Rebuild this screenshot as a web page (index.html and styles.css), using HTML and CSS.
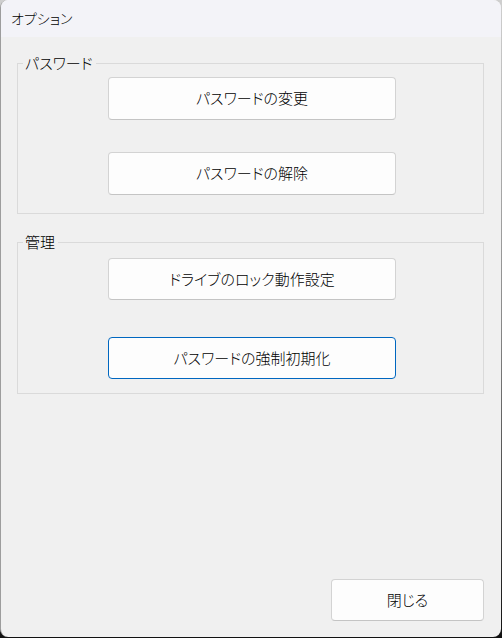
FILE: index.html
```html
<!DOCTYPE html>
<html lang="ja">
<head>
<meta charset="utf-8">
<title>オプション</title>
<link rel="stylesheet" href="styles.css">
</head>
<body>
<div class="window">
  <div class="titlebar"><span class="title">オプション</span></div>
  <div class="content">
    <fieldset class="group group-password">
      <legend class="legend">パスワード</legend>
      <div class="stack stack-password">
        <button class="btn btn-wide">パスワードの変更</button>
        <button class="btn btn-wide">パスワードの解除</button>
      </div>
    </fieldset>
    <fieldset class="group group-admin">
      <legend class="legend">管理</legend>
      <div class="stack stack-admin">
        <button class="btn btn-wide btn-short">ドライブのロック動作設定</button>
        <button class="btn btn-wide btn-short btn-focus">パスワードの強制初期化</button>
      </div>
    </fieldset>
    <div class="footer">
      <button class="btn btn-close">閉じる</button>
    </div>
  </div>
</div>
</body>
</html>
```

FILE: styles.css
```css
* { box-sizing: border-box; }
html, body {
  margin: 0;
  padding: 0;
  width: 502px;
  height: 638px;
  overflow: hidden;
}
body {
  background: linear-gradient(#cfcfcf, #8a8a8a 50%, #111111);
  font-family: "Noto Sans CJK JP", "Noto Sans", sans-serif;
  font-feature-settings: "palt";
  font-weight: 300;
  color: #000000;
}
.window {
  width: 501px;
  height: 637px;
  display: flex;
  flex-direction: column;
  background: #f0f0f0;
  border-left: 1px solid #9d9d9d;
  border-radius: 8px;
  overflow: hidden;
}
.titlebar {
  height: 37px;
  flex: none;
  background: #f3f3f8;
  display: flex;
  align-items: center;
  padding-left: 10px;
}
.title {
  font-size: 14px;
  line-height: 20px;
  padding-bottom: 1px;
}
.content {
  flex: 1;
  display: flex;
  flex-direction: column;
  padding: 16px 17px 16px 16px;
}
.group {
  margin: 0;
  padding: 0;
  border: 1px solid #dadada;
  min-width: 0;
}
.group-admin { margin-top: 18px; }
.legend {
  margin-left: 5px;
  padding: 0 3px 0 2px;
  font-size: 15px;
  line-height: 20px;
}
.stack {
  display: flex;
  flex-direction: column;
  padding-left: 90px;
}
.stack-password {
  gap: 32px;
  padding-top: 4px;
  padding-bottom: 18px;
}
.stack-admin {
  gap: 37px;
  padding-top: 6px;
  padding-bottom: 14px;
}
.btn {
  font-family: inherit;
  font-feature-settings: "palt";
  font-weight: 300;
  font-size: 15px;
  color: #000000;
  background: #fdfdfd;
  border: 1px solid #d3d3d3;
  border-bottom-color: #c4c4c4;
  border-radius: 4px;
  padding: 0 0 2px;
  margin: 0;
}
.btn-wide {
  width: 288px;
  height: 43px;
}
.btn-short { height: 42px; }
.btn-focus {
  border: 1px solid #0067c0;
}
.footer {
  margin-top: auto;
  display: flex;
  justify-content: flex-end;
}
.btn-close {
  width: 153px;
  height: 42px;
}
```
